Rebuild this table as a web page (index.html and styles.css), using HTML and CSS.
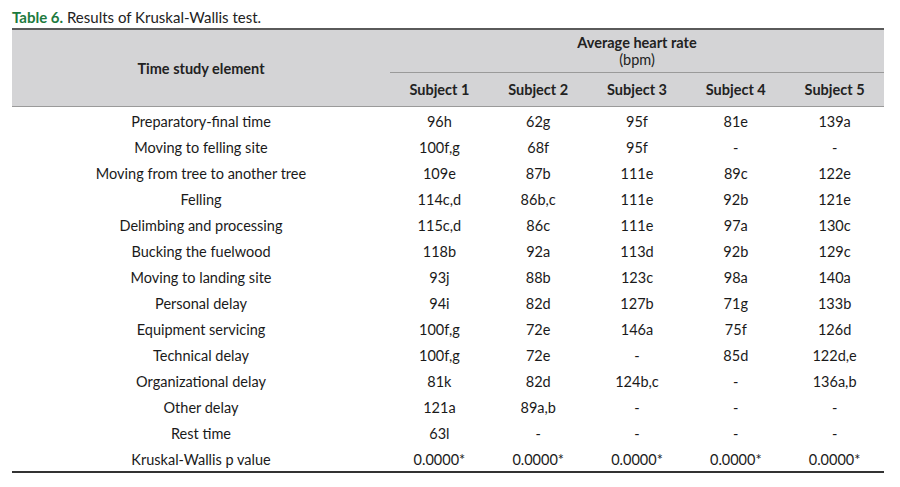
FILE: index.html
```html
<!DOCTYPE html>
<html>
<head>
<meta charset="utf-8">
<link rel="stylesheet" href="styles.css">
</head>
<body>
<div class="wrap">
  <div class="caption"><span class="label">Table 6.</span> Results of Kruskal-Wallis test.</div>
  <table class="tbl">
    <thead>
      <tr class="h1">
        <th rowspan="2" class="first">Time study element</th>
        <th colspan="5" class="group">Average heart rate<br><span class="unit">(bpm)</span></th>
      </tr>
      <tr class="h2">
        <th>Subject 1</th><th>Subject 2</th><th>Subject 3</th><th>Subject 4</th><th>Subject 5</th>
      </tr>
    </thead>
    <tbody>
      <tr><td>Preparatory-final time</td><td>96h</td><td>62g</td><td>95f</td><td>81e</td><td>139a</td></tr>
      <tr><td>Moving to felling site</td><td>100f,g</td><td>68f</td><td>95f</td><td>-</td><td>-</td></tr>
      <tr><td>Moving from tree to another tree</td><td>109e</td><td>87b</td><td>111e</td><td>89c</td><td>122e</td></tr>
      <tr><td>Felling</td><td>114c,d</td><td>86b,c</td><td>111e</td><td>92b</td><td>121e</td></tr>
      <tr><td>Delimbing and processing</td><td>115c,d</td><td>86c</td><td>111e</td><td>97a</td><td>130c</td></tr>
      <tr><td>Bucking the fuelwood</td><td>118b</td><td>92a</td><td>113d</td><td>92b</td><td>129c</td></tr>
      <tr><td>Moving to landing site</td><td>93j</td><td>88b</td><td>123c</td><td>98a</td><td>140a</td></tr>
      <tr><td>Personal delay</td><td>94i</td><td>82d</td><td>127b</td><td>71g</td><td>133b</td></tr>
      <tr><td>Equipment servicing</td><td>100f,g</td><td>72e</td><td>146a</td><td>75f</td><td>126d</td></tr>
      <tr><td>Technical delay</td><td>100f,g</td><td>72e</td><td>-</td><td>85d</td><td>122d,e</td></tr>
      <tr><td>Organizational delay</td><td>81k</td><td>82d</td><td>124b,c</td><td>-</td><td>136a,b</td></tr>
      <tr><td>Other delay</td><td>121a</td><td>89a,b</td><td>-</td><td>-</td><td>-</td></tr>
      <tr><td>Rest time</td><td>63l</td><td>-</td><td>-</td><td>-</td><td>-</td></tr>
      <tr><td>Kruskal-Wallis p value</td><td>0.0000*</td><td>0.0000*</td><td>0.0000*</td><td>0.0000*</td><td>0.0000*</td></tr>
    </tbody>
  </table>
</div>
</body>
</html>
```
FILE: styles.css
```css
html, body {
  margin: 0;
  padding: 0;
  background: #ffffff;
}
body {
  font-family: "Lato", "Open Sans", sans-serif;
  color: #1a1a1a;
  font-size: 14.5px;
}
.wrap {
  padding: 8px 16px 0 12px;
}
.caption {
  font-size: 15px;
  line-height: 18px;
  height: 20px;
  color: #222;
}
.caption .label {
  color: #1d7a3e;
  font-weight: 700;
}
.tbl {
  width: 872px;
  border-collapse: collapse;
  table-layout: fixed;
}
.tbl th {
  font-weight: 700;
  background: #d4d4d6;
  color: #222;
  text-align: center;
  padding: 0;
  font-size: 14.5px;
}
.tbl thead tr.h1 th {
  border-top: 2px solid #5a5a5a;
}
.tbl th.first {
  width: 378px;
  border-bottom: 1px solid #9a9a9a;
}
.tbl th.group {
  height: 42px;
  line-height: 17px;
  vertical-align: middle;
  border-bottom: 1px solid #9a9a9a;
}
.tbl th.group .unit {
  font-weight: 400;
}
.tbl tr.h2 th {
  height: 33px;
  border-bottom: 1px solid #9a9a9a;
}
.tbl td {
  height: 24px;
  padding: 2px 0 0 0;
  text-align: center;
  font-size: 14.5px;
  color: #1a1a1a;
}
.tbl tbody tr:last-child td {
  border-bottom: 2px solid #333;
}
```
